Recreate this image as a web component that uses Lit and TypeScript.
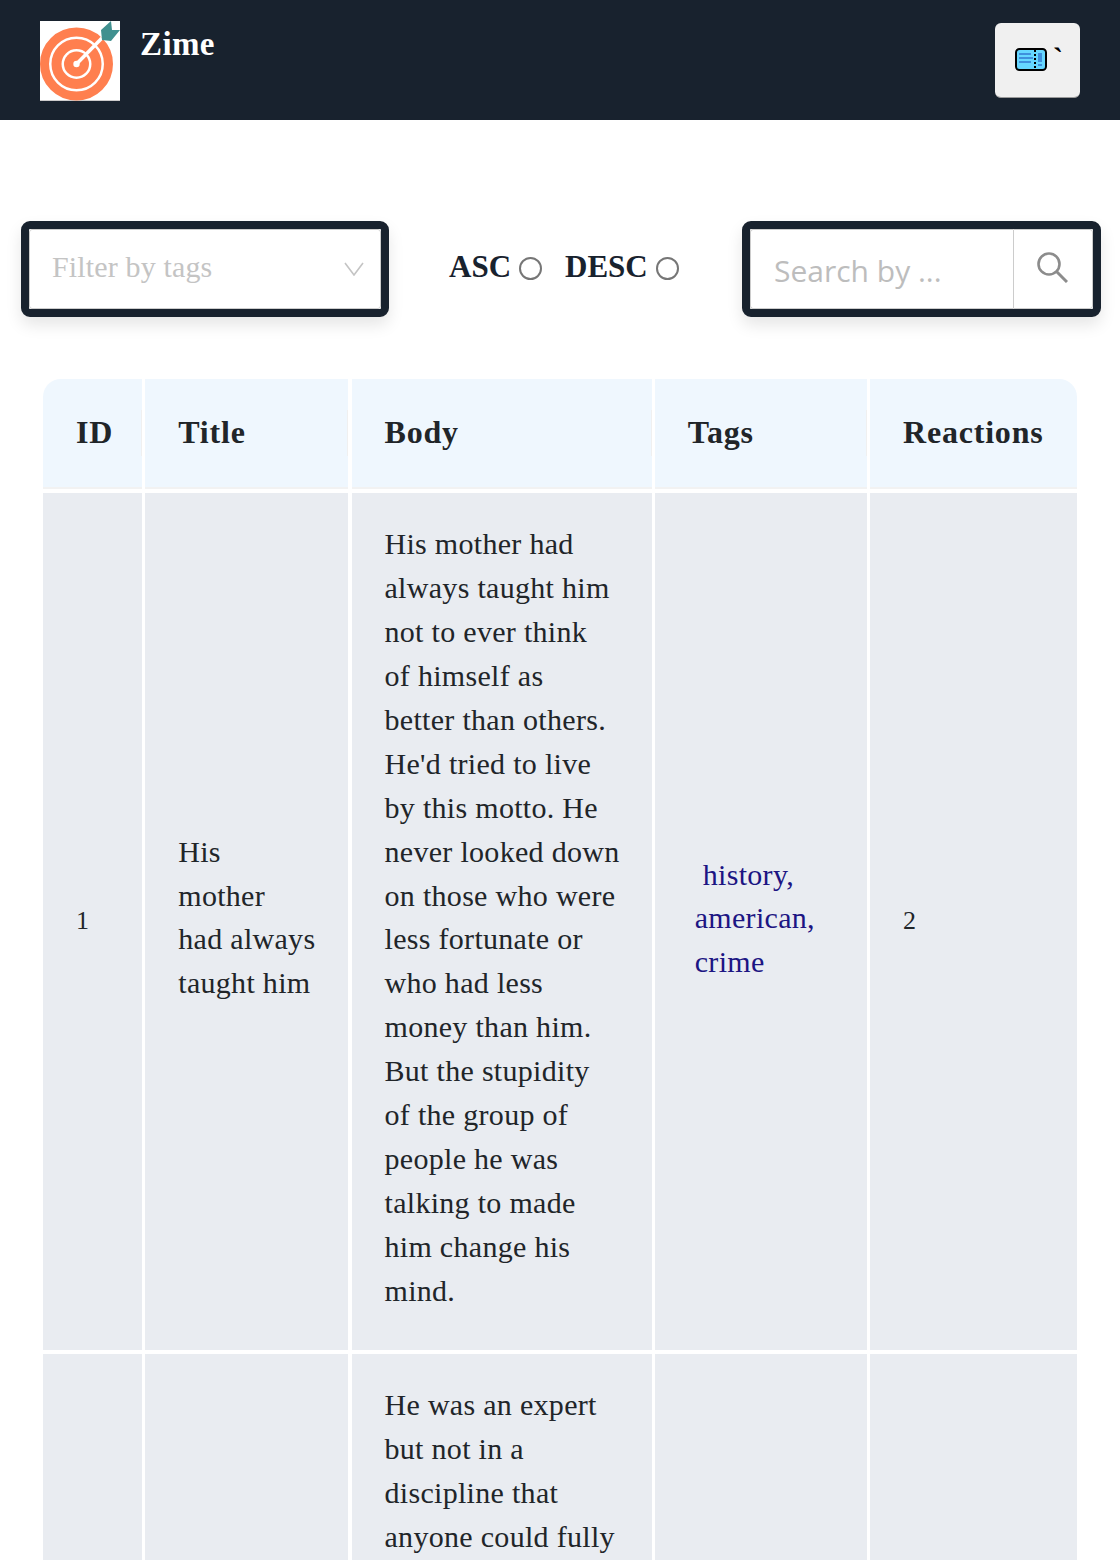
import { LitElement, html, css } from 'lit';
import { customElement } from 'lit/decorators.js';

const rows = [
  {
    id: '1',
    title: ['His', 'mother', 'had always', 'taught him'],
    body: ['His mother had', 'always taught him', 'not to ever think', 'of himself as', 'better than others.', "He'd tried to live", 'by this motto. He', 'never looked down', 'on those who were', 'less fortunate or', 'who had less', 'money than him.', 'But the stupidity', 'of the group of', 'people he was', 'talking to made', 'him change his', 'mind.'],
    tags: ['history,', 'american,', 'crime'],
    reactions: '2',
  },
  {
    id: '',
    title: [],
    body: ['He was an expert', 'but not in a', 'discipline that', 'anyone could fully'],
    tags: [],
    reactions: '',
  },
];

@customElement('app-root')
export class AppRoot extends LitElement {
  static styles = css`
    :host {
      display: block;
      height: 1560px;
      overflow: hidden;
      background: #fff;
      color: #212529;
      font-family: "Liberation Serif", serif;
      font-size: 30px;
    }
    .nav {
      height: 120px;
      background: #18222e;
      display: flex;
      padding: 21px 40px 0;
      box-sizing: border-box;
    }
    .logo { width: 80px; height: 80px; display: block; }
    .brand {
      margin-left: 20px;
      color: #fff;
      font-weight: 700;
      font-size: 33px;
      letter-spacing: .4px;
      line-height: 46px;
    }
    .ticket-btn {
      margin: 2px 0 0 auto;
      width: 85px;
      height: 75px;
      background: #f0f0f0;
      border-radius: 6px;
      border-bottom: 1px solid #9a9a9a;
      box-sizing: border-box;
      display: flex;
      padding: 25px 0 0 20px;
      color: #000;
    }
    .ticket-btn svg { width: 32px; height: 23px; display: block; }
    .tick { margin-left: 6px; font-weight: 700; font-size: 30px; line-height: 20px; }
    .controls {
      display: flex;
      align-items: center;
      padding: 101px 19px 0 21px;
    }
    .framed {
      height: 96px;
      box-sizing: border-box;
      border: 8px solid #18222e;
      border-radius: 9px;
      box-shadow: 0 8px 16px rgba(0, 0, 0, .1);
      background: #fff;
      display: flex;
    }
    .filter { width: 368px; }
    .select {
      flex: 1;
      border: 1px solid #ccc;
      border-radius: 3px;
      display: flex;
      align-items: center;
      justify-content: space-between;
      padding: 0 16px 4px 22px;
      color: #c4c4c4;
      letter-spacing: .15px;
    }
    .select svg { width: 20px; height: 14px; margin-top: 4px; }
    .order {
      margin-left: 60px;
      padding-bottom: 4px;
      display: flex;
      align-items: center;
      font-weight: 700;
      font-size: 31px;
      color: #18222e;
    }
    .radio {
      width: 23px;
      height: 23px;
      box-sizing: border-box;
      border: 2px solid #767676;
      border-radius: 50%;
      margin: 2px 23px 0 8px;
    }
    .search { margin-left: auto; width: 359px; }
    .search-input {
      flex: 1;
      border: 1px solid #ccc;
      border-right: 0;
      border-radius: 3px 0 0 3px;
      padding: 2px 0 0 23px;
      display: flex;
      align-items: center;
      font-family: "Open Sans", sans-serif;
      font-size: 30px;
      color: #bdbdbd;
    }
    .search-btn {
      width: 80px;
      border: 1px solid #ccc;
      border-radius: 0 3px 3px 0;
      display: flex;
      align-items: center;
      justify-content: center;
      box-sizing: border-box;
    }
    .search-btn svg { width: 32px; height: 32px; margin: 0 3px 4px 0; }
    .table {
      margin: 62px 43px 0;
      display: grid;
      grid-template-columns: 99px 203px 300px 212px 207px;
      column-gap: 3.25px;
      row-gap: 4px;
    }
    .th {
      height: 110px;
      box-sizing: border-box;
      background: #eff7fe;
      border-bottom: 2px solid #f2f2f2;
      padding: 0 33px 2px;
      display: flex;
      align-items: center;
      font-weight: 700;
      font-size: 32px;
      letter-spacing: .8px;
      position: relative;
    }
    .th::after {
      content: "";
      position: absolute;
      right: 0;
      top: 31px;
      height: 46px;
      width: 1px;
      background: #f0f0f0;
    }
    .th:nth-child(1) { border-top-left-radius: 18px; }
    .th:nth-child(5) { border-top-right-radius: 18px; }
    .th:nth-child(5)::after { display: none; }
    .td {
      background: #e9ecf1;
      padding: 29px 33px 37px;
      display: flex;
      flex-direction: column;
      justify-content: center;
      line-height: 43.94px;
      letter-spacing: .3px;
      white-space: nowrap;
    }
    /* the reference font has old-style figures, so these sit low and small */
    .num { font-size: 26px; padding-top: 33px; padding-bottom: 33px; }
    .tags { color: #1c1583; padding: 30px 0 36px 40px; }
    .tags div:first-child { padding-left: 8px; }
  `;

  render() {
    return html`
      <div class="nav">
        <svg class="logo" viewBox="0 0 80 80">
          <rect width="80" height="80" fill="#fff"/>
          <rect y="79" width="80" height="1" fill="#ccc"/>
          <circle cx="36.5" cy="43" r="32" fill="none" stroke="#ff7f4f" stroke-width="9"/>
          <circle cx="36.5" cy="43" r="20" fill="none" stroke="#ff7f4f" stroke-width="10"/>
          <circle cx="36.5" cy="43" r="12.5" fill="#ff7f4f"/>
          <path d="M36.5 43 L 62 17" stroke="#fff" stroke-width="3.5"/>
          <circle cx="36.5" cy="43" r="3.2" fill="#fff"/>
          <path d="M61 9 L71 0 L72 9 L80 9 L71 20 L62 19 Z" fill="#40908f"/>
        </svg>
        <div class="brand">Zime</div>
        <div class="ticket-btn">
          <svg viewBox="0 0 32 23">
            <rect x="1" y="1" width="30" height="21" rx="3.5" fill="#66d6ff" stroke="#000" stroke-width="2"/>
            <path d="M4 6h12M4 10h14M4 14h12" stroke="#3f8fdc" stroke-width="2"/>
            <rect x="23" y="5" width="4" height="9" fill="#3f8fdc"/>
            <rect x="23" y="16" width="4" height="2" fill="#3f8fdc"/>
            <path d="M20 2v20" stroke="#000" stroke-width="2" stroke-dasharray="2 2"/>
          </svg>
          <span class="tick">\`</span>
        </div>
      </div>

      <div class="controls">
        <div class="framed filter">
          <div class="select">
            <span>Filter by tags</span>
            <svg viewBox="0 0 20 14"><path d="M1 1l9 12 9-12" fill="none" stroke="#c4c4c4" stroke-width="1.6"/></svg>
          </div>
        </div>
        <div class="order">
          <span>ASC</span><span class="radio"></span>
          <span>DESC</span><span class="radio"></span>
        </div>
        <div class="framed search">
          <div class="search-input">Search by ...</div>
          <div class="search-btn">
            <svg viewBox="0 0 32 32"><circle cx="13" cy="13" r="10.5" fill="none" stroke="#8c8c8c" stroke-width="2.6"/><path d="M20.5 20.5L31 31" stroke="#8c8c8c" stroke-width="3"/></svg>
          </div>
        </div>
      </div>

      <div class="table">
        ${['ID', 'Title', 'Body', 'Tags', 'Reactions'].map((h) => html`<div class="th">${h}</div>`)}
        ${rows.map((r) => html`
          <div class="td num">${r.id}</div>
          <div class="td">${r.title.map((l) => html`<div>${l}</div>`)}</div>
          <div class="td">${r.body.map((l) => html`<div>${l}</div>`)}</div>
          <div class="td tags">${r.tags.map((l) => html`<div>${l}</div>`)}</div>
          <div class="td num">${r.reactions}</div>
        `)}
      </div>
    `;
  }
}
